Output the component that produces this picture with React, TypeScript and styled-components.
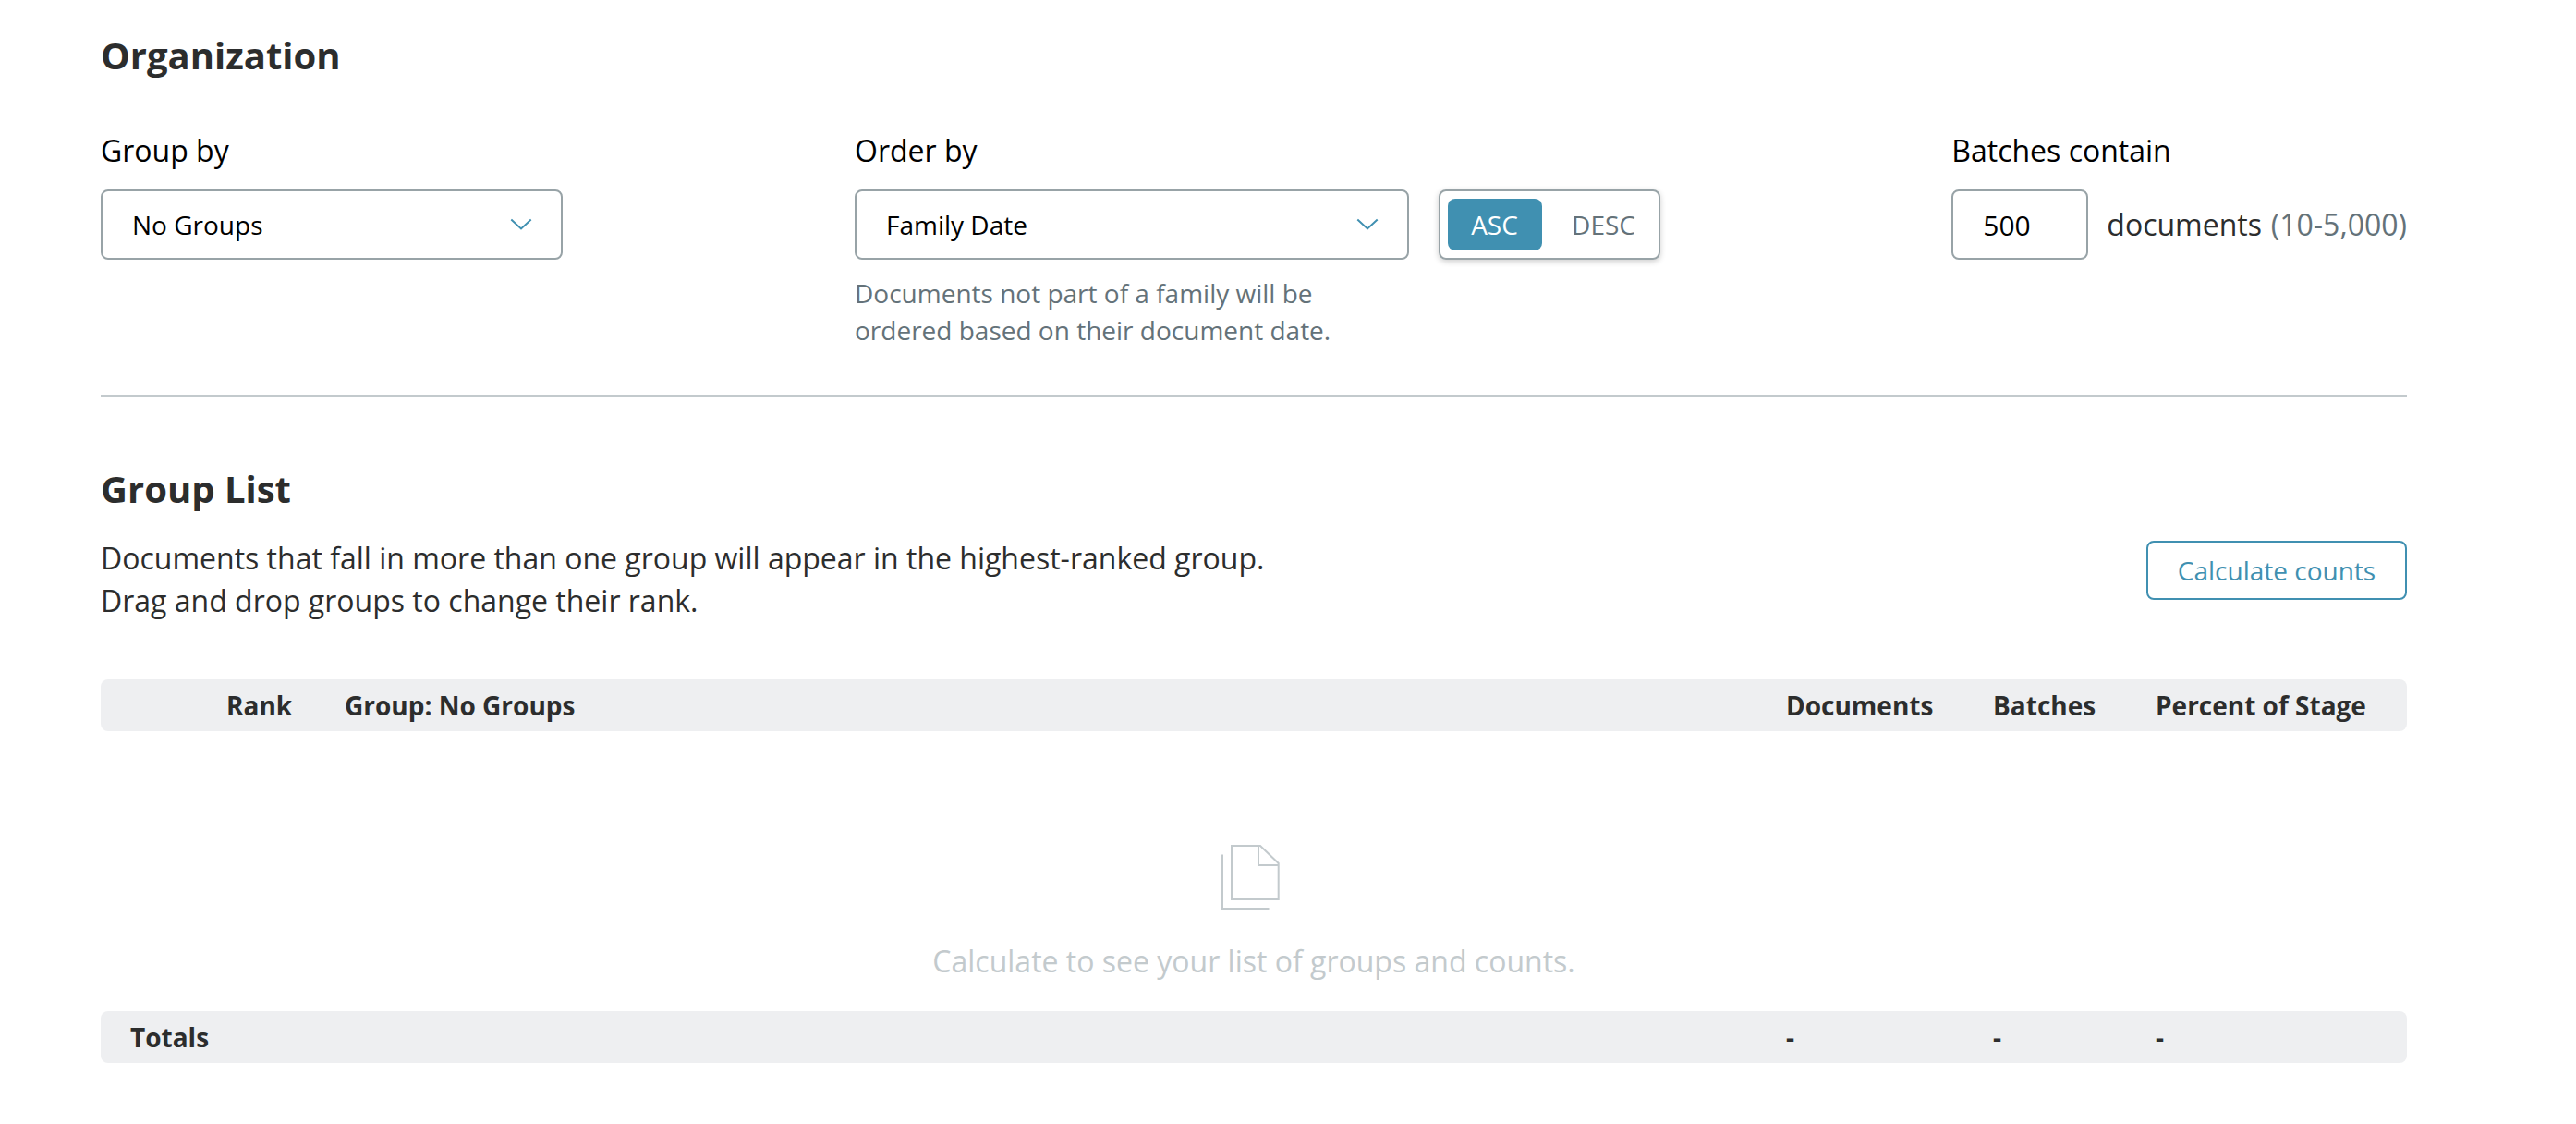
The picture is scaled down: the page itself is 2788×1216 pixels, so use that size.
import React, { useState } from "react";
import styled, { createGlobalStyle } from "styled-components";

const color = {
  ink: "#2c2d2d",
  muted: "#647279",
  border: "#98a3a7",
  rule: "#c3cacd",
  accent: "#4090b1",
  bar: "#eeeff1",
};

const GlobalStyle = createGlobalStyle`
  *, *::before, *::after { box-sizing: border-box; }
  body {
    margin: 0;
    background: #fff;
    color: ${color.ink};
    font-family: "Open Sans", "Noto Sans", sans-serif;
    font-size: 32px;
    line-height: 46px;
  }
  button, input { font-family: inherit; margin: 0; }
`;

const Page = styled.main`
  width: 2714px;
  padding: 32px 109px 0;
`;

const Heading = styled.h2`
  margin: 0;
  font-size: 40px;
  font-weight: 700;
  line-height: 56px;
`;

const Controls = styled.section`
  display: grid;
  grid-template-columns: 816px 1fr auto;
  align-items: start;
  margin-top: 52px;
  padding-bottom: 50px;
  border-bottom: 2px solid ${color.rule};
`;

const Field = styled.div`
  display: flex;
  flex-direction: column;
  align-items: flex-start;
`;

const Label = styled.label`
  margin-bottom: 19px;
  color: #000;
`;

const Inline = styled.div<{ $gap: number }>`
  display: flex;
  align-items: center;
  gap: ${(p) => p.$gap}px;
`;

const SelectBox = styled.button<{ $width: number }>`
  display: flex;
  align-items: center;
  justify-content: space-between;
  width: ${(p) => p.$width}px;
  height: 76px;
  padding: 0 31px 0 32px;
  border: 2px solid ${color.border};
  border-radius: 8px;
  background: #fff;
  color: #000;
  font-size: 28px;
`;

const Help = styled.p`
  width: 600px;
  margin: 16px 0 0;
  color: ${color.muted};
  font-size: 28px;
  line-height: 40px;
`;

const Toggle = styled.div`
  display: flex;
  justify-content: space-between;
  width: 240px;
  height: 76px;
  padding: 8px;
  border: 2px solid ${color.border};
  border-radius: 8px;
  box-shadow: 0 2px 6px rgba(0, 0, 0, 0.2);
`;

const ToggleOption = styled.button<{ $active: boolean }>`
  width: 102px;
  height: 56px;
  padding: 0 1px 0 0;
  border: 0;
  border-radius: 8px;
  background: ${(p) => (p.$active ? color.accent : "transparent")};
  color: ${(p) => (p.$active ? "#fff" : color.muted)};
  font-size: 28px;
`;

const CountInput = styled.input`
  width: 148px;
  height: 76px;
  padding: 0 32px;
  border: 2px solid ${color.border};
  border-radius: 8px;
  color: #000;
  font-size: 30px;
`;

const Range = styled.span`
  margin-left: 1.5px;
  color: ${color.muted};
`;

const GroupHeader = styled.section`
  display: flex;
  justify-content: space-between;
  align-items: flex-start;
  margin-top: 24px;
`;

const Description = styled.p`
  margin: 0;
`;

const OutlineButton = styled.button`
  width: 282px;
  height: 64px;
  margin-top: 4px;
  padding: 0;
  border: 2px solid ${color.accent};
  border-radius: 8px;
  background: #fff;
  color: ${color.accent};
  font-size: 28px;
`;

const GroupSection = styled.div`
  padding-top: 72px;
`;

const Table = styled.div`
  margin-top: 62px;
`;

const Bar = styled.div<{ $columns: string }>`
  display: grid;
  grid-template-columns: ${(p) => p.$columns};
  align-items: center;
  height: 56px;
  border-radius: 8px;
  background: ${color.bar};
  font-size: 28px;
  font-weight: 700;
`;

const EmptyState = styled.div`
  display: flex;
  flex-direction: column;
  align-items: center;
  height: 303px;
  padding-top: 122px;
  color: ${color.rule};

  svg { display: block; }
  p { margin: 32px 0 0; }
`;

const Chevron = () => (
  <svg width="24" height="14" viewBox="0 0 24 14" fill="none" stroke={color.accent} strokeWidth="2">
    <path d="M1.3 1.6 12 11.4 22.7 1.6" />
  </svg>
);

const DocumentsIcon = () => (
  <svg width="70" height="72" viewBox="0 0 70 72" fill="none" stroke="currentColor" strokeWidth="2">
    <path d="M11 2H42L61.7 21V60H11Z" />
    <path d="M40 2V23H61.7" />
    <path d="M1 11.5V70H51.5" />
  </svg>
);

type Direction = "ASC" | "DESC";
const directions: Direction[] = ["ASC", "DESC"];

export default function App() {
  const [direction, setDirection] = useState<Direction>("ASC");

  return (
    <>
      <GlobalStyle />
      <Page>
        <Heading>Organization</Heading>
        <Controls>
          <Field>
            <Label>Group by</Label>
            <SelectBox $width={500}>
              No Groups
              <Chevron />
            </SelectBox>
          </Field>
          <Field>
            <Label>Order by</Label>
            <Inline $gap={32}>
              <SelectBox $width={600}>
                Family Date
                <Chevron />
              </SelectBox>
              <Toggle>
                {directions.map((d) => (
                  <ToggleOption key={d} $active={d === direction} onClick={() => setDirection(d)}>
                    {d}
                  </ToggleOption>
                ))}
              </Toggle>
            </Inline>
            <Help>
              Documents not part of a family will be
              <br />
              ordered based on their document date.
            </Help>
          </Field>
          <Field>
            <Label htmlFor="batch-size">Batches contain</Label>
            <Inline $gap={20}>
              <CountInput id="batch-size" defaultValue="500" />
              <span>
                documents <Range>(10-5,000)</Range>
              </span>
            </Inline>
          </Field>
        </Controls>

        <GroupSection>
          <Heading>Group List</Heading>
          <GroupHeader>
            <Description>
              Documents that fall in more than one group will appear in the highest-ranked group.
              <br />
              Drag and drop groups to change their rank.
            </Description>
            <OutlineButton>Calculate counts</OutlineButton>
          </GroupHeader>
          <Table>
            <Bar $columns="136px 128px 1fr 224px 176px 272px">
              <span />
              <span>Rank</span>
              <span>Group: No Groups</span>
              <span>Documents</span>
              <span>Batches</span>
              <span>Percent of Stage</span>
            </Bar>
            <EmptyState>
              <DocumentsIcon />
              <p>Calculate to see your list of groups and counts.</p>
            </EmptyState>
            <Bar $columns="32px 1fr 224px 176px 272px">
              <span />
              <span>Totals</span>
              <span>-</span>
              <span>-</span>
              <span>-</span>
            </Bar>
          </Table>
        </GroupSection>
      </Page>
    </>
  );
}
